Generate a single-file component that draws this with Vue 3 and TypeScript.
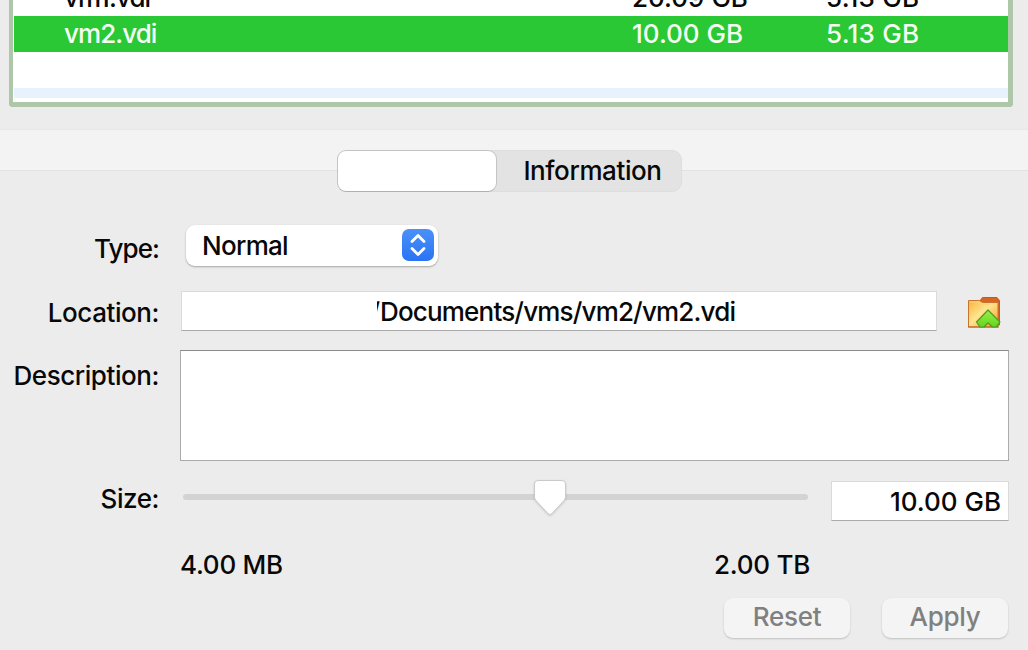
<script setup lang="ts">
interface Disk {
  name: string
  virtual: string
  actual: string
  selected: boolean
}

const disks: Disk[] = [
  { name: 'vm1.vdi', virtual: '20.09 GB', actual: '5.13 GB', selected: false },
  { name: 'vm2.vdi', virtual: '10.00 GB', actual: '5.13 GB', selected: true },
]
</script>

<template>
  <main class="window">
    <section class="disks">
      <div v-for="disk in disks" :key="disk.name" class="disk" :class="{ selected: disk.selected }">
        <span class="name">{{ disk.name }}</span>
        <span class="virtual">{{ disk.virtual }}</span>
        <span class="actual">{{ disk.actual }}</span>
      </div>
      <div class="disk"></div>
      <div class="stripe"></div>
    </section>

    <header class="band">
      <nav class="tabs">
        <button class="tab active" type="button"></button>
        <button class="tab" type="button"><span class="t-info">Information</span></button>
      </nav>
    </header>

    <section class="form">
      <div class="row type-row">
        <label class="label t-type">Type:</label>
        <div class="popup">
          <span class="t-normal">Normal</span>
          <svg class="stepper" viewBox="0 0 32 32" width="32" height="32">
            <defs>
              <linearGradient id="blue" x1="0" y1="0" x2="0" y2="1">
                <stop offset="0" stop-color="#4a92f8" />
                <stop offset="1" stop-color="#2a73f4" />
              </linearGradient>
            </defs>
            <rect width="32" height="32" rx="7" fill="url(#blue)" />
            <path d="M10 12.5 16 6.5 22 12.5M10 19.5 16 25.5 22 19.5" fill="none" stroke="#fff" stroke-width="2.8" stroke-linecap="round" stroke-linejoin="round" />
          </svg>
        </div>
      </div>

      <div class="row location-row">
        <label class="label t-label">Location:</label>
        <div class="field path">
          <span class="slash">/</span><span class="t-path">Documents/vms/vm2/vm2.vdi</span>
        </div>
        <svg class="folder" viewBox="0 0 34 34" width="34" height="34">
          <defs>
            <linearGradient id="gold" x1="0" y1="0" x2="1" y2="1">
              <stop offset="0" stop-color="#f8b03c" />
              <stop offset=".45" stop-color="#ffe590" />
              <stop offset="1" stop-color="#f79c20" />
            </linearGradient>
            <linearGradient id="leaf" x1="0" y1="0" x2="0" y2="1">
              <stop offset="0" stop-color="#9af04a" />
              <stop offset="1" stop-color="#62d51c" />
            </linearGradient>
          </defs>
          <path d="M12 6 15.500 1.500H30L32.500 4.500V29H12Z" fill="#d96524" stroke="#c65a20" />
          <path d="M1.500 4.500H12.500L15.500 6.500H31V31H1.500Z" fill="url(#gold)" stroke="#c8742c" />
          <path d="M2.500 6H12L15 8H30" fill="none" stroke="#ffd67c" />
          <path d="M1 31H32" stroke="#b9642b" />
          <path d="M21 14 33 26 29 31 25.500 31 21 27 17 31 13 31 9.500 26Z" fill="url(#leaf)" stroke="#4f9b22" stroke-width="1.200" stroke-linejoin="round" />
        </svg>
      </div>

      <div class="row description-row">
        <label class="label t-label">Description:</label>
        <div class="description"></div>
      </div>

      <div class="row size-row">
        <label class="label t-label">Size:</label>
        <div class="slider">
          <svg class="thumb" viewBox="0 0 38 42" width="38" height="42">
            <path d="M7 3.500H31Q34.500 3.500 34.500 7V20Q34.500 22 33 23.500L21 36.500Q19 38.500 17 36.500L5 23.500Q3.500 22 3.500 20V7Q3.500 3.500 7 3.500Z" fill="#fff" stroke="#cacaca" />
          </svg>
        </div>
        <div class="field amount">10.00 GB</div>
      </div>

      <div class="range"><span class="t-min">4.00 MB</span><span class="t-max">2.00 TB</span></div>

      <footer class="actions">
        <button type="button" class="push">Reset</button>
        <button type="button" class="push">Apply</button>
      </footer>
    </section>
  </main>
</template>

<style>
body {
  background: #ececec;
}
</style>

<style scoped>
.window {
  width: 1028px;
  height: 650px;
  overflow: hidden;
  background: #ececec;
  color: #080808;
  font: 450 26px/36px Inter, "Liberation Sans", sans-serif;
  white-space: nowrap;
}
.window * {
  box-sizing: border-box;
}
button {
  border: 0;
  padding: 0;
  font: inherit;
  color: inherit;
}
.disks {
  display: flex;
  flex-direction: column;
  justify-content: flex-end;
  width: 1004px;
  height: 107px;
  margin-left: 9px;
  padding-bottom: 4px;
  overflow: hidden;
  background: #fff;
  border: solid #aec7a8;
  border-width: 0 5px 5px 4px;
  border-radius: 0 0 4px 4px;
}
.disk {
  display: flex;
  flex: none;
  height: 36px;
  margin-left: 1px;
  padding-left: 50px;
}
.name {
  width: 568px;
  letter-spacing: -0.95px;
}
.virtual {
  width: 194px;
}
.actual {
  letter-spacing: 0.25px;
}
.selected {
  background: #2ac834;
  color: #f4fff2;
}
.stripe {
  flex: none;
  height: 10px;
  margin-left: 1px;
  background: #e8f2fd;
}
.band {
  display: flex;
  height: 42px;
  margin-top: 22px;
  padding: 20px 0 0 337px;
  background: #f3f3f3;
  border-top: 1px solid #e8e8e8;
  border-bottom: 1px solid #e2e2e2;
}
.tabs {
  display: flex;
  width: 345px;
  height: 42px;
  background: #e3e3e3;
  border: 1px solid #dedede;
  border-radius: 10px;
}
.tab {
  flex: 1;
  padding-left: 7px;
  background: none;
}
.tab.active {
  flex: none;
  width: 160px;
  height: 42px;
  margin: -1px 0 0 -1px;
  background: #fff;
  border: 1px solid #c4c4c4;
  border-bottom-color: #b0b0b0;
  border-radius: 9px;
}
.t-info {
  letter-spacing: -0.4px;
}
.form {
  padding-top: 53px;
}
.row {
  display: flex;
}
.label {
  display: block;
  flex: none;
  width: 160px;
  padding-right: 1px;
  text-align: right;
}
.t-label {
  letter-spacing: -0.43px;
}
.t-type {
  letter-spacing: -0.9px;
}
.type-row {
  height: 67px;
}
.type-row .label {
  padding-top: 7px;
}
.popup {
  display: flex;
  align-items: center;
  justify-content: space-between;
  width: 252px;
  height: 41px;
  margin: 1px 0 0 26px;
  padding: 0 4px 0 16px;
  background: #fff;
  border-radius: 9px;
  box-shadow: 0 1px 2px #0000004d;
}
.stepper {
  margin-bottom: 1px;
}
.t-normal {
  padding-top: 1px;
  letter-spacing: -0.7px;
}
.location-row {
  height: 59px;
}
.location-row .label {
  padding-top: 4px;
}
.field {
  height: 40px;
  background: #fff;
  border: 1px solid #dadada;
  border-bottom-color: #aaa;
}
.path {
  display: flex;
  width: 756px;
  margin-left: 21px;
  padding: 2px 0 0 195px;
}
.slash {
  display: flex;
  justify-content: flex-end;
  width: 3px;
  height: 22px;
  overflow: hidden;
}
.t-path {
  letter-spacing: -0.82px;
}
.folder {
  margin: 5px 0 0 30px;
}
.description-row {
  height: 130px;
}
.description-row .label {
  padding-top: 8px;
}
.description {
  width: 829px;
  height: 111px;
  margin-left: 20px;
  background: #fff;
  border: 1px solid #ababab;
  border-top-color: #8c8c8c;
}
.size-row {
  height: 67px;
}
.size-row .label {
  padding-top: 1px;
}
.slider {
  width: 625px;
  height: 6px;
  margin: 14px 23px 0 23px;
  background: #d3d3d3;
  border-radius: 3px;
}
.thumb {
  display: block;
  margin: -17px 0 0 348px;
  filter: drop-shadow(0 1px 1px #00000026);
}
.amount {
  width: 178px;
  margin-top: 1px;
  padding: 2px 7px 0 0;
  text-align: right;
}
.range {
  display: flex;
  justify-content: space-between;
  width: 630px;
  height: 51px;
  margin-left: 180px;
}
.t-min {
  letter-spacing: -0.25px;
}
.t-max {
  letter-spacing: -0.25px;
}
.actions {
  display: flex;
  justify-content: flex-end;
  gap: 32px;
  padding-right: 20px;
}
.push {
  width: 126px;
  height: 40px;
  padding-bottom: 2px;
  background: #f4f4f4;
  border-radius: 9px;
  box-shadow: 0 1px 2px #00000030;
  color: #808080;
  letter-spacing: -0.3px;
}
</style>
